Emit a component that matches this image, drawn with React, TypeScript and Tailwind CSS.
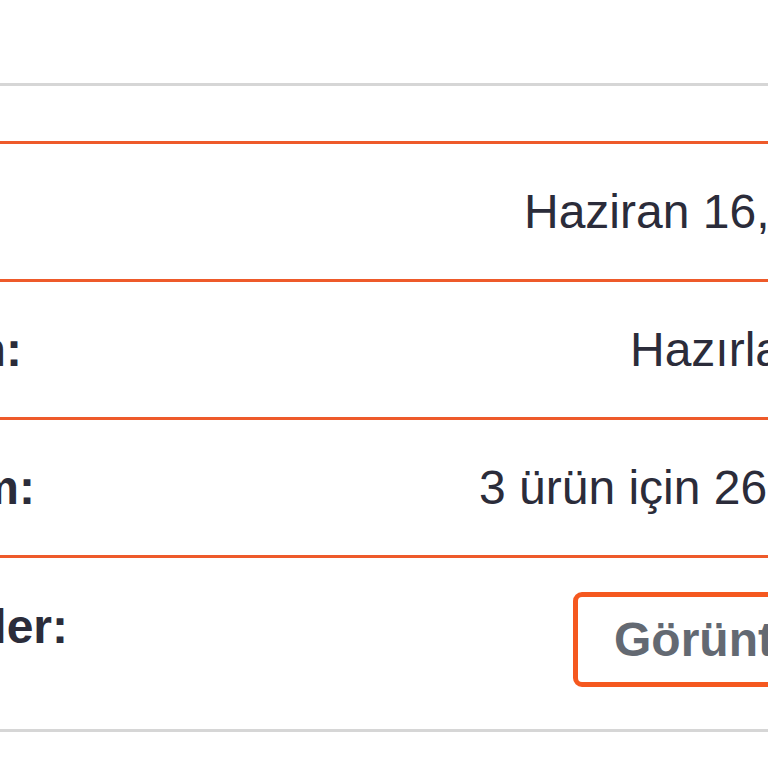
export default function App() {
  const font = { fontFamily: '"Liberation Sans", Arial, sans-serif' };
  return (
    <div className="w-[768px] h-[768px] overflow-hidden bg-white" style={font}>
      <div className="h-[83px]" />
      <div className="border-t-[3px] border-[#d6d6d6]">
        <div className="h-[55px]" />
        {/* Row 1 */}
        <div className="flex border-t-[3px] border-[#ee5a2a] py-[40px] text-[48px] leading-[55px] text-[#2b2c3a] whitespace-nowrap">
          <div className="w-[0px] shrink-0 flex justify-end font-bold">Tarih:</div>
          <div className="pl-[524px]">Haziran 16, 2023</div>
        </div>
        {/* Row 2 */}
        <div className="flex border-t-[3px] border-[#ee5a2a] py-[40px] text-[48px] leading-[55px] text-[#2b2c3a] whitespace-nowrap">
          <div className="w-[22px] shrink-0 flex justify-end font-bold">Durum:</div>
          <div className="pl-[608px]">Hazırlanıyor</div>
        </div>
        {/* Row 3 */}
        <div className="flex border-t-[3px] border-[#ee5a2a] py-[40px] text-[48px] leading-[55px] text-[#2b2c3a] whitespace-nowrap">
          <div className="w-[35px] shrink-0 flex justify-end font-bold">Toplam:</div>
          <div className="pl-[444px]">3 ürün için 26,97 ₺</div>
        </div>
        {/* Row 4 */}
        <div className="flex items-start border-t-[3px] border-b-[3px] border-t-[#ee5a2a] border-b-[#d6d6d6] h-[177px] text-[48px] leading-[55px] text-[#2b2c3a] whitespace-nowrap">
          <div className="w-[68px] shrink-0 flex justify-end font-bold pt-[41px]">İşlemler:</div>
          <div className="pl-[505px] pt-[34px]">
            <button className="border-[5px] border-[#f5581f] rounded-[9px] pl-[36px] pr-[36px] py-[15px] font-bold text-[#636972] bg-white">
              Görüntüle
            </button>
          </div>
        </div>
      </div>
    </div>
  );
}
